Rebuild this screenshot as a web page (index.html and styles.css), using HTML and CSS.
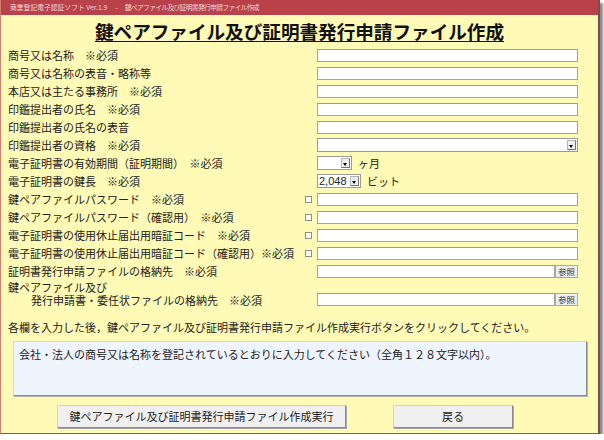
FILE: index.html
```html
<!DOCTYPE html>
<html lang="ja">
<head>
<meta charset="utf-8">
<link rel="stylesheet" href="styles.css">
</head>
<body>
<div class="window">
  <div class="titlebar">商業登記電子認証ソフト Ver.1.9<span class="sep">-</span><span class="doc">鍵ペアファイル及び証明書発行申請ファイル作成</span></div>
  <h1 class="heading"><span>鍵ペアファイル及び証明書発行申請ファイル作成</span></h1>
  <div class="form">
    <div class="label">商号又は名称　※必須</div><div class="chk"></div><div class="field"><div class="input"></div></div>
    <div class="label">商号又は名称の表音・略称等</div><div class="chk"></div><div class="field"><div class="input"></div></div>
    <div class="label">本店又は主たる事務所　※必須</div><div class="chk"></div><div class="field"><div class="input"></div></div>
    <div class="label">印鑑提出者の氏名　※必須</div><div class="chk"></div><div class="field"><div class="input"></div></div>
    <div class="label">印鑑提出者の氏名の表音</div><div class="chk"></div><div class="field"><div class="input"></div></div>
    <div class="label">印鑑提出者の資格　※必須</div><div class="chk"></div><div class="field"><div class="select full"><span class="val"></span><span class="arrow"></span></div></div>
    <div class="label">電子証明書の有効期間（証明期間）　※必須</div><div class="chk"></div><div class="field"><div class="select months"><span class="val"></span><span class="arrow"></span></div><span class="unit">ヶ月</span></div>
    <div class="label">電子証明書の鍵長　※必須</div><div class="chk"></div><div class="field"><div class="select bits"><span class="val">2,048</span><span class="arrow"></span></div><span class="unit">ビット</span></div>
    <div class="label">鍵ペアファイルパスワード　※必須</div><div class="chk"><span class="box"></span></div><div class="field"><div class="input"></div></div>
    <div class="label">鍵ペアファイルパスワード（確認用）　※必須</div><div class="chk"><span class="box"></span></div><div class="field"><div class="input"></div></div>
    <div class="label">電子証明書の使用休止届出用暗証コード　※必須</div><div class="chk"><span class="box"></span></div><div class="field"><div class="input"></div></div>
    <div class="label">電子証明書の使用休止届出用暗証コード（確認用）※必須</div><div class="chk"><span class="box"></span></div><div class="field"><div class="input"></div></div>
    <div class="label">証明書発行申請ファイルの格納先　※必須</div><div class="chk"></div><div class="field"><div class="input"></div><div class="browse">参照</div></div>
    <div class="label two"><div>鍵ペアファイル及び</div><div class="indent">発行申請書・委任状ファイルの格納先　※必須</div></div><div class="chk"></div><div class="field last"><div class="input"></div><div class="browse">参照</div></div>
  </div>
  <p class="info">各欄を入力した後，鍵ペアファイル及び証明書発行申請ファイル作成実行ボタンをクリックしてください。</p>
  <div class="message">会社・法人の商号又は名称を登記されているとおりに入力してください（全角１２８文字以内）。</div>
  <div class="buttons">
    <div class="btn btn-run">鍵ペアファイル及び証明書発行申請ファイル作成実行</div>
    <div class="btn btn-back">戻る</div>
  </div>
</div>
</body>
</html>
```
FILE: styles.css
```css
html, body {
  margin: 0;
  padding: 0;
  background: #ffffff;
}
body {
  font-family: "Noto Sans CJK JP", "Noto Sans", sans-serif;
  color: #222;
}
.window {
  width: 600px;
  height: 434px;
  box-sizing: border-box;
  background: #fffab5;
  border-left: 1px solid #cf7f70;
  border-right: 2px solid #7d4b4b;
  border-bottom: 1px solid #8a5555;
  box-shadow: 3px 3px 2px rgba(0, 0, 0, 0.45);
  display: flex;
  flex-direction: column;
}
.titlebar {
  flex: none;
  height: 15px;
  line-height: 15px;
  background: #b8414a;
  color: #f3d5d5;
  font-size: 6.8px;
  padding-left: 9px;
  white-space: nowrap;
}
.titlebar .sep {
  margin: 0 7px 0 8px;
}
.titlebar .doc {
  letter-spacing: -0.7px;
}
.heading {
  flex: none;
  margin: 0;
  height: 31px;
  line-height: 31px;
  text-align: center;
  font-size: 18.6px;
  font-weight: bold;
  color: #111;
}
.heading span {
  text-decoration: underline;
  text-underline-offset: 2px;
  text-decoration-thickness: 1px;
}
.form {
  flex: none;
  display: grid;
  grid-template-columns: 296px 13px 261px;
  grid-template-rows: repeat(13, 18px) 27px;
  padding-left: 7px;
  font-size: 11px;
}
.label {
  display: flex;
  align-items: center;
  white-space: nowrap;
  line-height: 11px;
}
.label.two {
  display: block;
  padding-top: 1px;
  line-height: 13px;
}
.label .indent {
  padding-left: 23px;
}
.chk {
  display: flex;
  align-items: center;
}
.box {
  width: 5px;
  height: 5px;
  margin-left: 1px;
  border: 1px solid #8c8c8c;
  background: #fff;
}
.field {
  display: flex;
  align-items: center;
}
.field.last {
  align-items: flex-end;
  padding-bottom: 1px;
}
.input {
  flex: 1;
  height: 13px;
  box-sizing: border-box;
  border: 1px solid #a3a3a3;
  border-top-color: #9a9a9a;
  background: #fff;
}
.browse {
  width: 23px;
  height: 13px;
  box-sizing: border-box;
  border: 1px solid #a8a8a8;
  background: #efefef;
  font-size: 8.5px;
  line-height: 11px;
  text-align: center;
  color: #333;
}
.select {
  height: 14px;
  box-sizing: border-box;
  border: 1px solid #9a9a9a;
  background: #fff;
  display: flex;
  align-items: stretch;
}
.select.full { width: 261px; }
.select.months { width: 35px; }
.select.bits { width: 44px; }
.select .val {
  flex: 1;
  font-size: 11px;
  line-height: 12px;
  padding-left: 1px;
  color: #222;
  font-family: "Liberation Sans", "Noto Sans", sans-serif;
}
.select .arrow {
  width: 9px;
  margin: 1px;
  box-sizing: border-box;
  background: #efefef;
  border: 1px solid #b5b5b5;
  border-right-color: #777;
  border-bottom-color: #777;
  position: relative;
}
.select .arrow::after {
  content: "";
  position: absolute;
  left: 1px;
  top: 4px;
  border-left: 2.5px solid transparent;
  border-right: 2.5px solid transparent;
  border-top: 3px solid #000;
}
.unit {
  margin-left: 6px;
  font-size: 11px;
  line-height: 11px;
}
.info {
  flex: none;
  margin: 13px 0 0 7px;
  font-size: 11px;
  line-height: 14px;
  white-space: nowrap;
}
.message {
  flex: none;
  margin: 7px 0 0 12px;
  width: 574px;
  height: 55px;
  box-sizing: border-box;
  background: #eff5ff;
  border: 1px solid #d6d6d6;
  border-right-color: #8c8c8c;
  border-bottom-color: #8c8c8c;
  box-shadow: 1px 1px 0 #b0b0b0;
  padding: 5px 0 0 5px;
  font-size: 11px;
  line-height: 14px;
}
.buttons {
  flex: none;
  display: flex;
  margin: 9px 0 0 56px;
  gap: 47px;
}
.btn {
  height: 23px;
  box-sizing: border-box;
  background: #f0f0f0;
  border: 1px solid #d0d0d0;
  border-right-color: #8a8a8a;
  border-bottom-color: #8a8a8a;
  box-shadow: 1px 1px 0 #a8a8a8;
  font-size: 11px;
  line-height: 21px;
  text-align: center;
  color: #222;
}
.btn-run { width: 289px; }
.btn-back { width: 120px; }
```
